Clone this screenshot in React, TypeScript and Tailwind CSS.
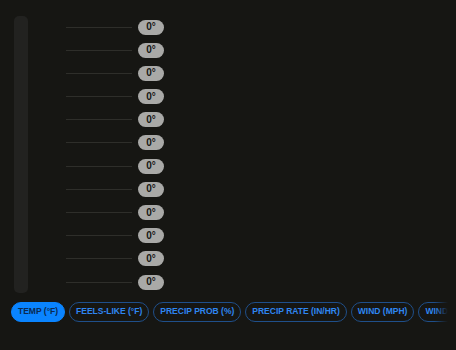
const rows = Array.from({ length: 12 }, (_, i) => i);

const tabs = [
  "TEMP (°F)",
  "FEELS-LIKE (°F)",
  "PRECIP PROB (%)",
  "PRECIP RATE (IN/HR)",
  "WIND (MPH)",
  "WIND GUST (MPH)",
];

export default function App() {
  return (
    <div
      className="w-[456px] h-[350px] bg-[#161613] overflow-hidden flex flex-col"
      style={{ fontFamily: "'Liberation Sans', Arial, sans-serif" }}
    >
      <div className="flex pl-[14px] pt-[16px]">
        {/* scrubber track */}
        <div className="w-[14px] h-[277px] rounded-[5px] bg-[#222220]" />

        {/* hour rows */}
        <div className="flex flex-col ml-[38px] -mt-[0.6px]">
          {rows.map((i) => (
            <div key={i} className="h-[23.2px] flex items-center">
              <div className="w-[66px] h-px bg-[#2e2e2a]" />
              <div className="ml-[6px] w-[26px] h-[15px] rounded-full bg-[#a9a9a7] flex items-center justify-center">
                <span className="text-[10px] font-bold text-[#161613] leading-none">0°</span>
              </div>
            </div>
          ))}
        </div>
      </div>

      {/* metric tabs */}
      <div className="relative mt-[8px] ml-[11px] w-[437px] overflow-hidden">
        <div className="flex gap-[4px]">
          {tabs.map((t, i) => (
            <div
              key={t}
              className={
                i === 0
                  ? "shrink-0 h-[20px] px-[6px] rounded-full border border-[#0a84ff] bg-[#0a84ff] flex items-center text-[8.5px] font-bold text-[#0b2a52] whitespace-nowrap"
                  : "shrink-0 h-[20px] px-[6px] rounded-full border border-[#1f4f8a] flex items-center text-[8.5px] font-bold text-[#2f86f0] whitespace-nowrap"
              }
            >
              {t}
            </div>
          ))}
        </div>
        <div className="absolute right-0 top-0 h-[20px] w-[14px] bg-gradient-to-r from-transparent to-[#161613]" />
      </div>
    </div>
  );
}
